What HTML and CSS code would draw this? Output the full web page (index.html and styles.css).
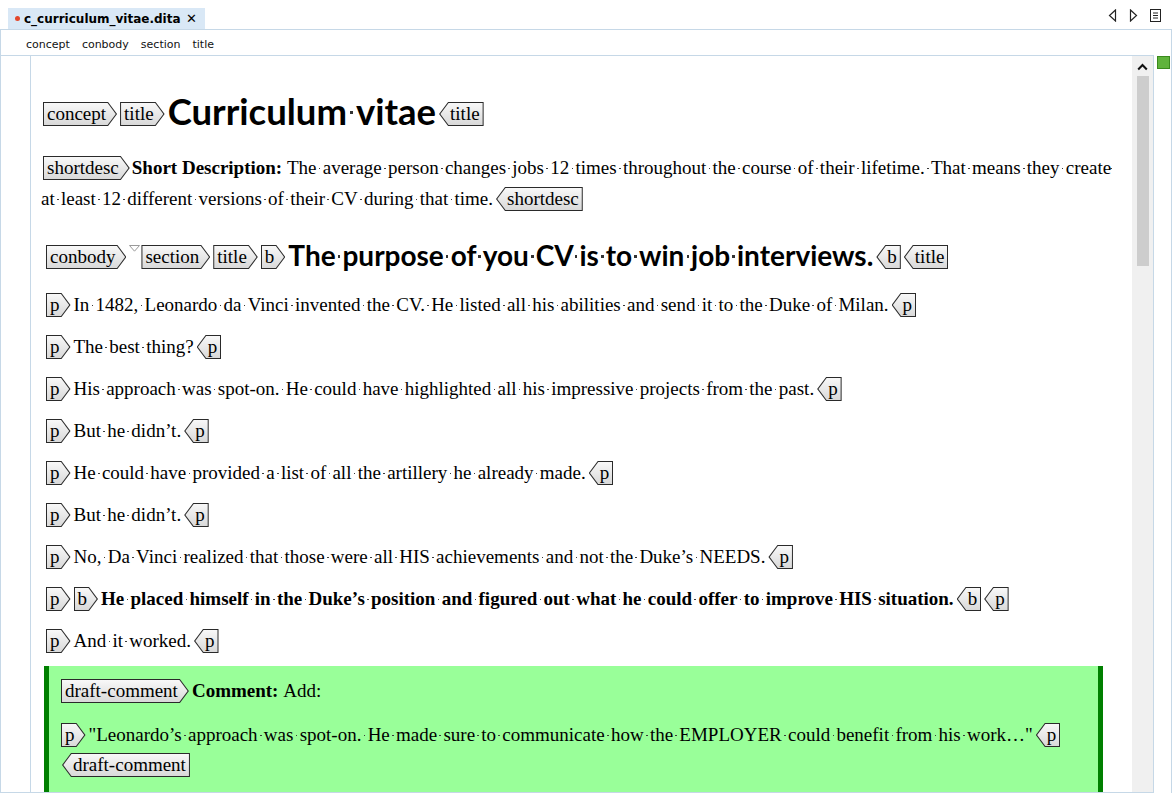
FILE: index.html
```html
<!DOCTYPE html>
<html>
<head>
<meta charset="utf-8">
<link rel="stylesheet" href="styles.css">
</head>
<body>
<div class="tabbar">
  <div class="tab"><span class="dot"></span><span class="tabname">c_curriculum_vitae.dita</span><span class="close">✕</span></div>
  <div class="navicons">
    <svg width="9" height="13" viewBox="0 0 9 13"><path d="M7.5 1 L1.5 6.5 L7.5 12 Z" fill="none" stroke="#222" stroke-width="1.2"/></svg>
    <svg width="9" height="13" viewBox="0 0 9 13"><path d="M1.5 1 L7.5 6.5 L1.5 12 Z" fill="none" stroke="#222" stroke-width="1.2"/></svg>
    <svg width="11" height="13" viewBox="0 0 11 13"><rect x="0.5" y="0.5" width="10" height="12" fill="none" stroke="#222"/><path d="M3 4 H8 M3 6.5 H8 M3 9 H8" stroke="#222"/></svg>
  </div>
</div>
<div class="frame">
  <div class="crumbs"><span>concept</span><span>conbody</span><span>section</span><span>title</span></div>
  <div class="main">
    <div class="editor">
      <div class="gutter"></div>
      <div class="content">
        <div class="title-row"><span class="tg s">concept</span><span class="tg s">title</span><span class="h1">Curriculum<i class="w"> </i>vitae</span><span class="tg e">title</span></div>
        <div class="sd"><span class="tg s first">shortdesc</span><b>Short Description: </b>The<i class="w"> </i>average<i class="w"> </i>person<i class="w"> </i>changes<i class="w"> </i>jobs<i class="w"> </i>12<i class="w"> </i>times<i class="w"> </i>throughout<i class="w"> </i>the<i class="w"> </i>course<i class="w"> </i>of<i class="w"> </i>their<i class="w"> </i>lifetime.<i class="w"> </i>That<i class="w"> </i>means<i class="w"> </i>they<i class="w"> </i>create<i class="w"> </i><br>at<i class="w"> </i>least<i class="w"> </i>12<i class="w"> </i>different<i class="w"> </i>versions<i class="w"> </i>of<i class="w"> </i>their<i class="w"> </i>CV<i class="w"> </i>during<i class="w"> </i>that<i class="w"> </i>time.<span class="tg e">shortdesc</span></div>
        <div class="sec-row"><span class="tg s">conbody</span><svg class="twisty" width="11" height="7" viewBox="0 0 11 7"><path d="M0.5 0.5 H10.5 L5.5 6.2 Z" fill="#fff" stroke="#9a9a9a"/></svg><span class="tg s">section</span><span class="tg s">title</span><span class="tg s">b</span><span class="h2">The<i class="w"> </i>purpose<i class="w"> </i>of<i class="w"> </i>you<i class="w"> </i>CV<i class="w"> </i>is<i class="w"> </i>to<i class="w"> </i>win<i class="w"> </i>job<i class="w"> </i>interviews.</span><span class="tg e">b</span><span class="tg e">title</span></div>
        <div class="p"><span class="tg s">p</span>In<i class="w"> </i>1482,<i class="w"> </i>Leonardo<i class="w"> </i>da<i class="w"> </i>Vinci<i class="w"> </i>invented<i class="w"> </i>the<i class="w"> </i>CV.<i class="w"> </i>He<i class="w"> </i>listed<i class="w"> </i>all<i class="w"> </i>his<i class="w"> </i>abilities<i class="w"> </i>and<i class="w"> </i>send<i class="w"> </i>it<i class="w"> </i>to<i class="w"> </i>the<i class="w"> </i>Duke<i class="w"> </i>of<i class="w"> </i>Milan.<span class="tg e">p</span></div>
        <div class="p"><span class="tg s">p</span>The<i class="w"> </i>best<i class="w"> </i>thing?<span class="tg e">p</span></div>
        <div class="p"><span class="tg s">p</span>His<i class="w"> </i>approach<i class="w"> </i>was<i class="w"> </i>spot-on.<i class="w"> </i>He<i class="w"> </i>could<i class="w"> </i>have<i class="w"> </i>highlighted<i class="w"> </i>all<i class="w"> </i>his<i class="w"> </i>impressive<i class="w"> </i>projects<i class="w"> </i>from<i class="w"> </i>the<i class="w"> </i>past.<span class="tg e">p</span></div>
        <div class="p"><span class="tg s">p</span>But<i class="w"> </i>he<i class="w"> </i>didn’t.<span class="tg e">p</span></div>
        <div class="p"><span class="tg s">p</span>He<i class="w"> </i>could<i class="w"> </i>have<i class="w"> </i>provided<i class="w"> </i>a<i class="w"> </i>list<i class="w"> </i>of<i class="w"> </i>all<i class="w"> </i>the<i class="w"> </i>artillery<i class="w"> </i>he<i class="w"> </i>already<i class="w"> </i>made.<span class="tg e">p</span></div>
        <div class="p"><span class="tg s">p</span>But<i class="w"> </i>he<i class="w"> </i>didn’t.<span class="tg e">p</span></div>
        <div class="p"><span class="tg s">p</span>No,<i class="w"> </i>Da<i class="w"> </i>Vinci<i class="w"> </i>realized<i class="w"> </i>that<i class="w"> </i>those<i class="w"> </i>were<i class="w"> </i>all<i class="w"> </i>HIS<i class="w"> </i>achievements<i class="w"> </i>and<i class="w"> </i>not<i class="w"> </i>the<i class="w"> </i>Duke’s<i class="w"> </i>NEEDS.<span class="tg e">p</span></div>
        <div class="p"><span class="tg s">p</span><span class="tg s">b</span><b>He<i class="w"> </i>placed<i class="w"> </i>himself<i class="w"> </i>in<i class="w"> </i>the<i class="w"> </i>Duke’s<i class="w"> </i>position<i class="w"> </i>and<i class="w"> </i>figured<i class="w"> </i>out<i class="w"> </i>what<i class="w"> </i>he<i class="w"> </i>could<i class="w"> </i>offer<i class="w"> </i>to<i class="w"> </i>improve<i class="w"> </i>HIS<i class="w"> </i>situation.</b><span class="tg e">b</span><span class="tg e">p</span></div>
        <div class="p"><span class="tg s">p</span>And<i class="w"> </i>it<i class="w"> </i>worked.<span class="tg e">p</span></div>
        <div class="comment">
          <div class="c-head"><span class="tg s">draft-comment</span><b>Comment: </b>Add:</div>
          <div class="c-p"><span class="tg s">p</span>"Leonardo’s<i class="w"> </i>approach<i class="w"> </i>was<i class="w"> </i>spot-on.<i class="w"> </i>He<i class="w"> </i>made<i class="w"> </i>sure<i class="w"> </i>to<i class="w"> </i>communicate<i class="w"> </i>how<i class="w"> </i>the<i class="w"> </i>EMPLOYER<i class="w"> </i>could<i class="w"> </i>benefit<i class="w"> </i>from<i class="w"> </i>his<i class="w"> </i>work…"<span class="tg e">p</span></div>
          <div class="c-end"><span class="tg e">draft-comment</span></div>
        </div>
      </div>
      <div class="scroll">
        <svg class="up" width="11" height="8" viewBox="0 0 11 8"><path d="M1.2 6.5 L5.5 2 L9.8 6.5" fill="none" stroke="#111" stroke-width="2"/></svg>
        <div class="thumb"></div>
      </div>
    </div>
    <div class="strip"><div class="ok"></div></div>
  </div>
</div>
</body>
</html>
```

FILE: styles.css
```css
html, body {
  margin: 0;
  padding: 0;
}
body {
  width: 1172px;
  height: 795px;
  overflow: hidden;
  background: #fff;
  font-family: "Liberation Serif", "Times New Roman", serif;
  color: #000;
}

/* tab bar */
.tabbar {
  height: 29px;
  display: flex;
  padding-left: 8px;
}
.tab {
  align-self: flex-end;
  height: 21px;
  width: 197px;
  box-sizing: border-box;
  background: #d9e8f6;
  display: flex;
  align-items: center;
  padding-left: 7px;
  font: bold 12px "DejaVu Sans", sans-serif;
  color: #000;
}
.dot {
  width: 5px;
  height: 5px;
  border-radius: 50%;
  background: #e3472b;
  margin-right: 4px;
}
.close {
  margin-left: auto;
  margin-right: 8px;
  font-size: 13px;
  font-weight: bold;
}
.navicons {
  margin-left: auto;
  margin-right: 11px;
  display: flex;
  align-items: center;
  gap: 12px;
  padding-top: 1px;
}

/* frame */
.frame {
  border: 1px solid #c6d8e7;
  border-bottom: none;
  height: 763px;
  display: flex;
  flex-direction: column;
}
.crumbs {
  height: 25px;
  box-sizing: border-box;
  padding: 4px 0 0 25px;
  flex: none;
  display: flex;
  align-items: center;
  gap: 12px;
  font: 11px "DejaVu Sans", sans-serif;
  color: #111;
}
.main {
  flex: 1;
  display: flex;
  min-height: 0;
}
.editor {
  flex: 1;
  display: flex;
  border-top: 1px solid #c6d8e7;
  border-right: 1px solid #c6d8e7;
  border-bottom: 1px solid #c6d8e7;
  min-height: 0;
}
.gutter {
  width: 29px;
  border-right: 1px solid #c6d8e7;
  flex: none;
}
.content {
  flex: 1;
  padding: 38px 0 0 10px;
  overflow: hidden;
  font-size: 19px;
}
.scroll {
  width: 21px;
  flex: none;
  background: #f0f0f0;
  display: flex;
  flex-direction: column;
  align-items: flex-start;
}
.scroll .up {
  margin: 7px 0 0 5px;
}
.thumb {
  margin: 5px 0 0 5px;
  width: 12px;
  height: 190px;
  background: #cdcdcd;
}
.strip {
  width: 17px;
  flex: none;
}
.ok {
  margin: 1px 0 0 3px;
  width: 11px;
  height: 11px;
  background: #5fb33b;
  border: 1px solid #3a8a1d;
}

/* space markers */
.w {
  font-style: normal;
  position: relative;
  word-spacing: 0.078em;
}
.w::after {
  content: "";
  position: absolute;
  left: 50%;
  top: 0.56em;
  width: 1.6px;
  height: 1.6px;
  margin-left: -0.8px;
  background: #3a3a3a;
}
.h1 .w,
.h2 .w {
  word-spacing: 0;
}
.h1 .w::after,
.h2 .w::after {
  top: 0.62em;
  width: 2.4px;
  height: 2.4px;
  margin-left: -1.2px;
  background: #333;
}

/* tags */
.tg {
  position: relative;
  display: inline-block;
  height: 24px;
  line-height: 24px;
  font-size: 19px;
  font-weight: normal;
  background: #2a2a2a;
  color: #000;
  vertical-align: baseline;
  white-space: nowrap;
}
.tg::before {
  content: "";
  position: absolute;
  left: 1px;
  top: 1px;
  right: 1px;
  bottom: 1px;
  z-index: -1;
  background: linear-gradient(#f8f8f8, #d9d9d9);
}
.tg.s {
  padding: 0 11px 0 4px;
  margin-right: 3px;
  clip-path: polygon(0 0, calc(100% - 9px) 0, 100% 50%, calc(100% - 9px) 100%, 0 100%);
}
.tg.s::before {
  clip-path: polygon(0 0, calc(100% - 8.5px) 0, calc(100% - 0.3px) 50%, calc(100% - 8.5px) 100%, 0 100%);
}
.tg.e {
  padding: 0 4px 0 11px;
  margin-left: 3px;
  clip-path: polygon(0 50%, 9px 0, 100% 0, 100% 100%, 9px 100%);
}
.tg.e::before {
  clip-path: polygon(0.3px 50%, 8.5px 0, 100% 0, 100% 100%, 8.5px 100%);
}

/* rows */
.title-row {
  height: 40px;
  display: flex;
  align-items: center;
  margin-left: 2px;
}
.h1 {
  font: bold 36.5px "Lato", sans-serif;
  line-height: 1;
  margin: 0 0 6px 0;
}
.sd {
  margin-top: 18px;
  line-height: 31px;
  white-space: nowrap;
}
.sd .first {
  margin-left: 2px;
  margin-right: 2px;
}
.sec-row {
  margin-top: 16px;
  height: 54px;
  display: flex;
  align-items: center;
  margin-left: 5px;
}
.twisty {
  align-self: flex-start;
  margin: 15px 1px 0 0;
}
.h2 {
  font: bold 28px "Lato", sans-serif;
  line-height: 1;
  margin: 0 0 4px 0;
}
.p {
  line-height: 42px;
  margin-left: 5px;
  white-space: nowrap;
}

/* comment */
.comment {
  margin: 4px 29px 0 3px;
  background: #99ff99;
  border-left: 5px solid #008000;
  border-right: 5px solid #008000;
  padding: 4px 0 30px 12px;
}
.c-head {
  line-height: 42px;
  white-space: nowrap;
}
.c-p {
  margin-top: 8px;
  line-height: 30px;
  white-space: nowrap;
}
.c-end {
  line-height: 30px;
  padding-left: 1px;
}
.c-end .tg.e {
  margin-left: 0;
}
```
